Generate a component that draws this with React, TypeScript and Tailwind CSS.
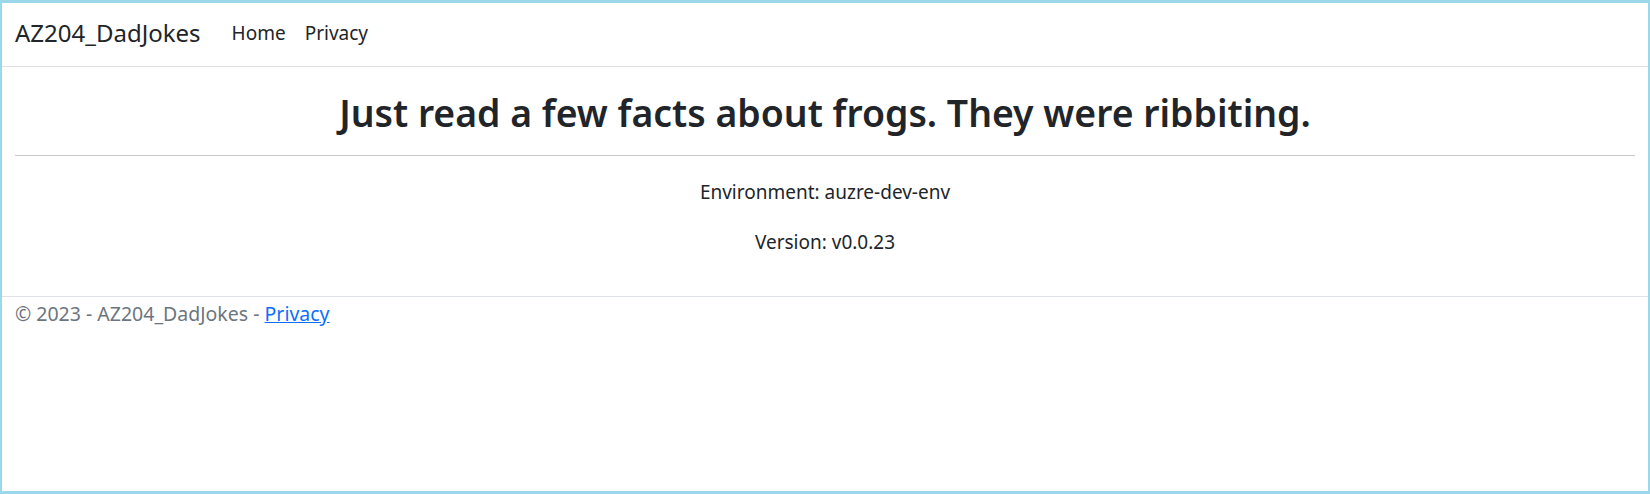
import React from "react";

export default function App() {
  const font = { fontFamily: '"Noto Sans", "Open Sans", sans-serif' };
  return (
    <div
      className="w-[1650px] h-[494px] bg-white border-[#9bd9ea] border-t-[3px] border-b-[3px] border-l-[2px] border-r-[2px] flex flex-col text-[#212529]"
      style={font}
    >
      <header className="h-[64px] border-b border-[#dfdde6] flex items-center px-[13px] pb-[3px]">
        <span className="text-[24px] text-[#212529] mr-[31px] leading-none">AZ204_DadJokes</span>
        <nav className="flex gap-[19px] text-[19px] text-[#212529] leading-none">
          <span>Home</span>
          <span>Privacy</span>
        </nav>
      </header>
      <main className="px-[13px] flex flex-col items-center">
        <h1 className="mt-[22px] text-[37.4px] font-semibold leading-[48px] text-[#212529]">
          Just read a few facts about frogs. They were ribbiting.
        </h1>
        <hr className="w-full mt-[18px] border-t border-[#c8c8c8]" />
        <p className="mt-[22px] text-[19px] leading-[28px]">Environment: auzre-dev-env</p>
        <p className="mt-[22px] text-[19px] leading-[28px]">Version: v0.0.23</p>
      </main>
      <footer className="mt-[40px] border-t border-[#dee2e6] px-[13px] pt-[3px]">
        <span className="text-[19.5px] leading-[28px] text-[#6c757d]">
          © 2023 - AZ204_DadJokes - <a className="text-[#0d6efd] underline">Privacy</a>
        </span>
      </footer>
    </div>
  );
}
